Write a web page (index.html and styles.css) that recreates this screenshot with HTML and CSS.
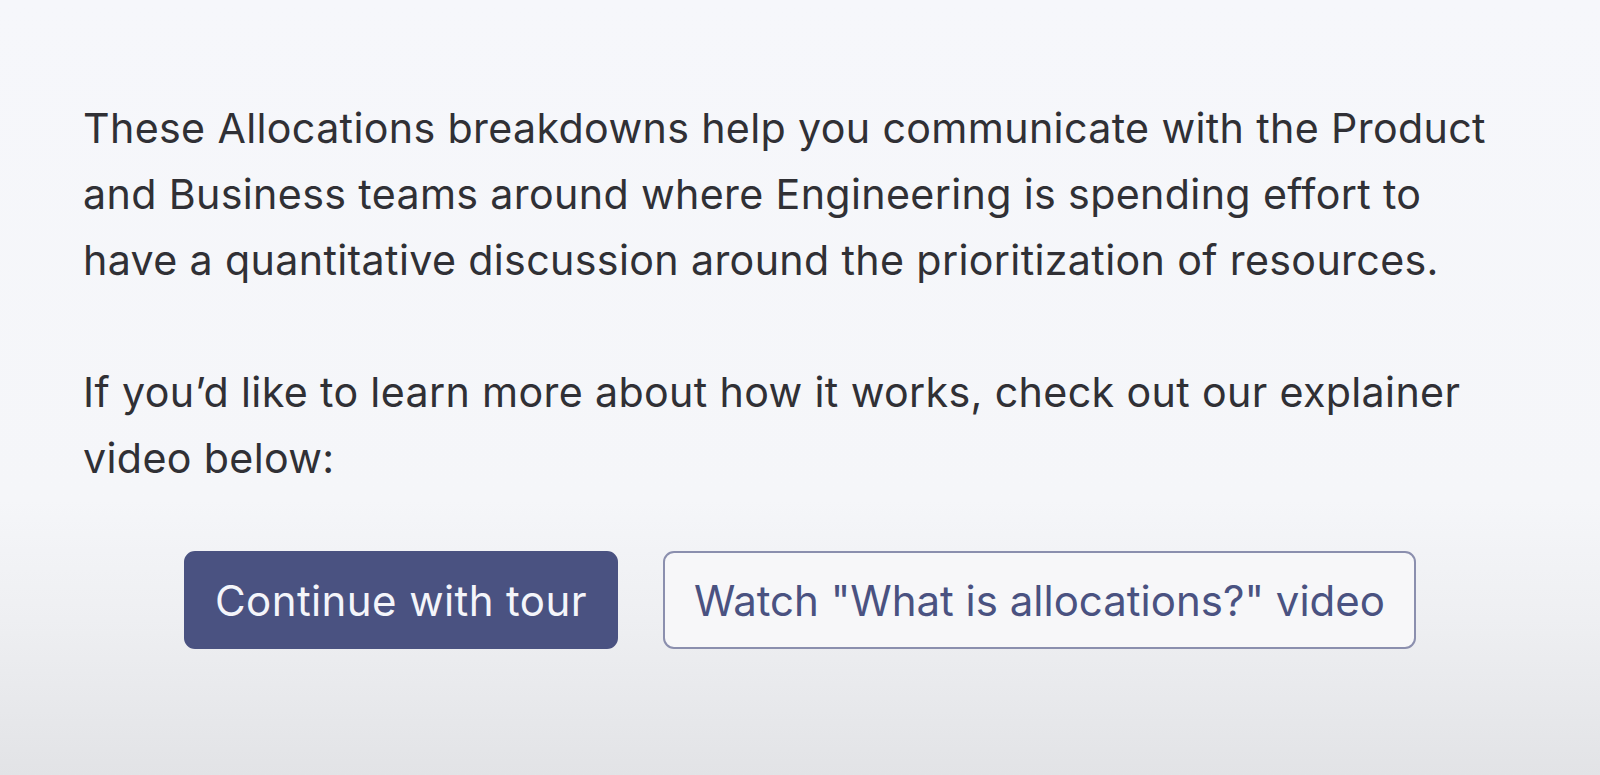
FILE: index.html
```html
<!DOCTYPE html>
<html>
<head>
<meta charset="utf-8">
<link rel="stylesheet" href="styles.css">
</head>
<body>
<main class="panel">
  <div class="copy">
    <p>These Allocations breakdowns help you communicate with the Product and Business teams around where Engineering is spending effort to have a quantitative discussion around the prioritization of resources.</p>
    <p>If you’d like to learn more about how it works, check out our explainer video below:</p>
  </div>
  <div class="actions">
    <button class="btn btn-primary">Continue with tour</button>
    <button class="btn btn-outline">Watch "What is allocations?" video</button>
  </div>
</main>
</body>
</html>
```

FILE: styles.css
```css
html, body {
  margin: 0;
  height: 100%;
}
body {
  background: linear-gradient(to bottom, #f6f7fb 0px, #f5f6f9 500px, #eeeff2 620px, #e2e3e6 775px);
  font-family: Inter, "Noto Sans", sans-serif;
  color: #303035;
  overflow: hidden;
}
.panel {
  padding: 95px 83px 0 83px;
  display: flex;
  flex-direction: column;
}
.copy p {
  margin: 0 0 66px 0;
  font-size: 41.2px;
  letter-spacing: 0.35px;
  line-height: 66px;
  max-width: 1420px;
}
.copy p:last-child {
  margin-bottom: 0;
}
.actions {
  margin-top: 60px;
  display: flex;
  justify-content: center;
  gap: 45px;
}
.btn {
  height: 98px;
  padding: 0 29px;
  font-family: Inter, "Noto Sans", sans-serif;
  font-size: 42px;
  border-radius: 11px;
  cursor: pointer;
}
.btn-primary {
  background: #4a5281;
  color: #f4f5fa;
  border: 2px solid #4a5281;
  letter-spacing: 0.4px;
}
.btn-outline {
  background: #f7f7f9;
  color: #4a5281;
  border: 2px solid #8b8fae;
}
```
